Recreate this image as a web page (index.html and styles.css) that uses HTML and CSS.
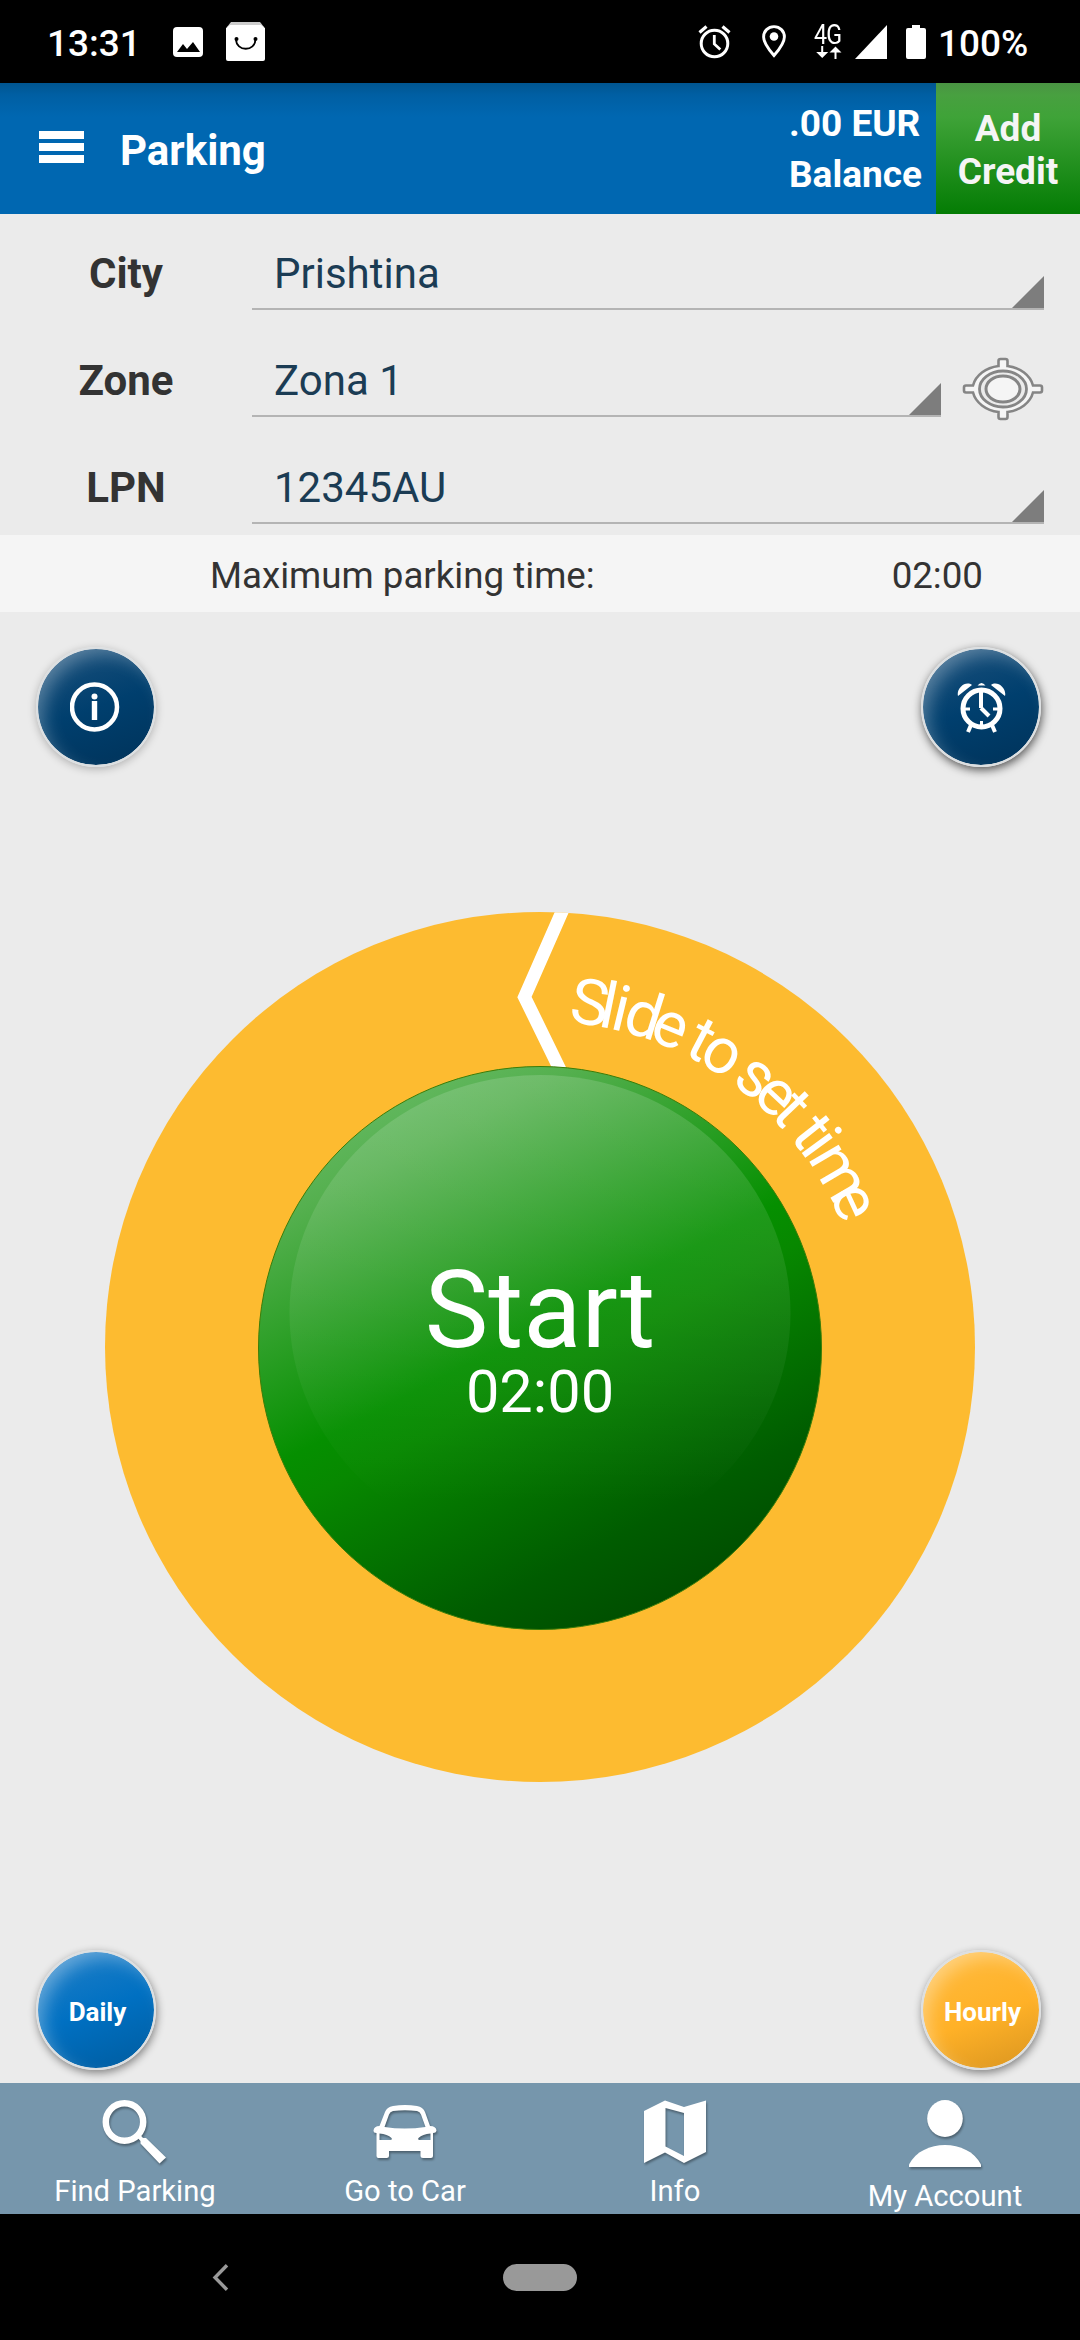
FILE: index.html
```html
<!DOCTYPE html>
<html lang="en">
<head>
    <meta charset="utf-8">
    <title>Parking</title>
    <link rel="stylesheet" href="styles.css">
</head>
<body>

    <div class="status-bar">
        <span class="clock">13:31</span>
        <svg class="icon-image" width="30" height="30" viewBox="0 0 30 30">
            <rect width="30" height="30" rx="4" fill="#fff"/>
            <path d="M4 25l6-8 4 5 6-7 7 10z" fill="#000"/>
        </svg>
        <svg class="icon-bag" width="39" height="39" viewBox="0 0 39 39">
            <path d="M5 0h29l4 5H1z" fill="#ccc"/>
            <path d="M4 3h31l4 3v31a2 2 0 0 1-2 2H2a2 2 0 0 1-2-2V6z" fill="#fff"/>
            <path d="M10 17c0 13 19.500 13 19.500 0" fill="none" stroke="#000" stroke-width="1.800"/>
            <circle cx="10.500" cy="17" r="2" fill="#000"/>
            <circle cx="29.500" cy="17" r="2" fill="#000"/>
        </svg>
        <svg class="icon-alarm" width="33" height="34" viewBox="0 0 33 34" fill="none" stroke="#fff">
            <circle cx="16.500" cy="18.500" r="13.300" stroke-width="3"/>
            <path d="M1.500 7.500l7-6M31.500 7.500l-7-6" stroke-width="3.200"/>
            <path d="M16.300 10v9l6 5.500" stroke-width="2.800"/>
        </svg>
        <svg class="icon-pin" width="24" height="33" viewBox="0 0 24 33">
            <path d="M12 1.600C6 1.600 1.600 6.200 1.600 12c0 6.500 6 13.500 10.400 18.500C16.400 25.500 22.400 18.500 22.400 12 22.400 6.200 18 1.600 12 1.600z" fill="none" stroke="#fff" stroke-width="2.900"/>
            <circle cx="12" cy="11.500" r="4.300" fill="#fff"/>
        </svg>
        <div class="network">
            <span>4G</span>
            <svg width="26" height="13" viewBox="0 0 26 13" fill="#fff">
                <path d="M5.200 0h2v6h5l-6 6-6-6h5zM18.500 13h2V6.500h5l-6-6-6 6h5z"/>
            </svg>
        </div>
        <svg class="icon-signal" width="32" height="34" viewBox="0 0 32 34">
            <path d="M0 34L32 0v34z" fill="#fff"/>
        </svg>
        <svg class="icon-battery" width="20" height="34" viewBox="0 0 20 34">
            <path d="M6 0h8v3h4a2 2 0 0 1 2 2v27a2 2 0 0 1-2 2H2a2 2 0 0 1-2-2V5a2 2 0 0 1 2-2h4z" fill="#fff"/>
        </svg>
        <span class="percent">100%</span>
    </div>

    <div class="header">
        <div class="menu"><i></i><i></i><i></i></div>
        <div class="title">Parking</div>
        <div class="balance">.00 EUR<br>Balance</div>
        <div class="add-credit">Add<br>Credit</div>
    </div>

    <div class="form">
        <div class="row">
            <div class="label">City</div>
            <div class="field">Prishtina<i class="corner"></i></div>
        </div>
        <div class="row">
            <div class="label">Zone</div>
            <div class="field">Zona 1<i class="corner"></i></div>
            <svg class="locate" width="82" height="64" viewBox="0 0 82 64" fill="none">
                <path d="M36.500 9V4q0-2 2-2h5q2 0 2 2v5A31 25 0 0 1 71 28.500h7q2 0 2 2v3q0 2-2 2h-7A31 25 0 0 1 45.500 55v5q0 2-2 2h-5q-2 0-2-2v-5A31 25 0 0 1 11 35.500H4q-2 0-2-2v-3q0-2 2-2h7A31 25 0 0 1 36.500 9z" fill="#f5f5f5" stroke="#858585" stroke-width="2.600"/>
                <ellipse cx="41" cy="32" rx="23.500" ry="18" fill="#ebebeb" stroke="#858585" stroke-width="2.800"/>
                <ellipse cx="41" cy="32" rx="17" ry="13" fill="#f5f5f5" stroke="#858585" stroke-width="3"/>
            </svg>
        </div>
        <div class="row">
            <div class="label">LPN</div>
            <div class="field">12345AU<i class="corner"></i></div>
        </div>
    </div>

    <div class="max-time">
        <span>Maximum parking time:</span>
        <span>02:00</span>
    </div>

    <div class="stage">
        <div class="buttons">
            <div class="round navy soft">
                <svg width="52" height="52" viewBox="0 0 52 52">
                    <circle cx="24.500" cy="26" r="22.500" fill="none" stroke="#fff" stroke-width="4.500"/>
                    <circle cx="24.500" cy="15.500" r="3" fill="#fff"/>
                    <rect x="21.800" y="20" width="5.400" height="19" fill="#fff"/>
                </svg>
            </div>
            <div class="round navy strong">
                <svg width="50" height="52" viewBox="0 0 50 52" fill="none" stroke="#fff">
                    <circle cx="25.500" cy="27.500" r="18.500" stroke-width="5"/>
                    <path d="M25 9v18" stroke-width="4"/>
                    <path d="M25 27l8 8" stroke-width="4"/>
                    <path d="M7 28h7M37 28h7M25.500 40v6" stroke-width="3"/>
                    <path d="M15 44l-3 7M36 44l3 7" stroke-width="4"/>
                    <path d="M2 15C0 7 10-1 16 4zM49 15C51 7 41-1 35 4zM21.500 4.500q4-5 8 0z" fill="#fff" stroke="none"/>
                </svg>
            </div>
        </div>

        <svg class="dial" width="870" height="870" viewBox="0 0 870 870">
            <defs>
                <linearGradient id="ball" x1="0.240" y1="0" x2="0.760" y2="1">
                    <stop offset="0.060" stop-color="#5fb65b"/>
                    <stop offset="0.130" stop-color="#55b04f"/>
                    <stop offset="0.470" stop-color="#058f00"/>
                    <stop offset="0.540" stop-color="#078800"/>
                    <stop offset="0.820" stop-color="#005c00"/>
                    <stop offset="0.960" stop-color="#004d00"/>
                </linearGradient>
                <linearGradient id="shine" x1="0" y1="0" x2="0" y2="1">
                    <stop offset="0" stop-color="#fff" stop-opacity="0.150"/>
                    <stop offset="0.900" stop-color="#fff" stop-opacity="0"/>
                </linearGradient>
                <clipPath id="ring"><circle cx="435" cy="435" r="435"/></clipPath>
                <path id="arc" d="M435 109A326 326 0 0 1 435 761"/>
            </defs>
            <circle cx="435" cy="435" r="435" fill="#fdbb30"/>
            <path d="M463 -14L419.500 85 461 170" fill="none" stroke="#fff" stroke-width="13" clip-path="url(#ring)"/>
            <text class="slide-text"><textPath href="#arc" startOffset="28"><tspan dx="0 -8.7 -3.6 -3.6 -8.3 -7.8 -3.7 -4.8 -8.4 -3.7 -7.6 -7.8 -4.8 -3.7 -4.8 -3.6 -14">Slide to set time</tspan></textPath></text>
            <circle cx="435" cy="436" r="281.500" fill="url(#ball)" stroke="#3c7d08" stroke-width="1"/>
            <ellipse cx="435" cy="401" rx="250.500" ry="238" fill="url(#shine)"/>
            <text class="start" x="435" y="435">Start</text>
            <text class="start-time" x="435" y="499.500">02:00</text>
        </svg>

        <div class="buttons">
            <div class="round blue">Daily</div>
            <div class="round amber">Hourly</div>
        </div>
    </div>

    <div class="tabs">
        <div class="tab">
            <svg width="66" height="66" viewBox="0 0 66 66">
                <circle cx="22.500" cy="23" r="18.700" fill="none" stroke="#fff" stroke-width="6.500"/>
                <path d="M34 37l4.500 5v2.500l19 20L64 58.500 44 39h-3l-4-4.500z" fill="#fff"/>
            </svg>
            <span>Find Parking</span>
        </div>
        <div class="tab">
            <svg width="66" height="66" viewBox="0 0 66 66">
                <path fill="#fff" fill-rule="evenodd" d="M7.500 27L13 13q2-5 8-6 12-2 24 0 6 1 8 6l5 14q6 0 6.500 4.500-.5 2.500-3.500 2.500v23q0 2-2 2h-8q-2.500 0-2.500-2.500V52H17v4.500q0 2.500-2.500 2.500h-8q-2 0-2-2V34q-3 0-3-2.500Q2 27 7.500 27zM12.500 28q20 3 41 0L49 15.500q-1-3-4-3.500-12-1.500-24 0-3 .5-4 3.500zM7.500 34.500v6.500h11q2 0 1-2-4-4-12-4.500zM58.500 34.500v6.500h-11q-2 0-1-2 4-4 12-4.500z"/>
            </svg>
            <span>Go to Car</span>
        </div>
        <div class="tab">
            <svg width="66" height="66" viewBox="0 0 66 66">
                <path fill="#fff" fill-rule="evenodd" d="M2 12L23 1.500 42 8 64 1.500V53L42 64 23 53.500 2 64zM23.500 9v38.500L42 57V14z"/>
            </svg>
            <span>Info</span>
        </div>
        <div class="tab account">
            <svg width="74" height="70" viewBox="0 0 74 70" fill="#fff">
                <ellipse cx="37" cy="19.500" rx="17.800" ry="18.500"/>
                <path d="M1 65.500C14 39.500 60 39.500 73 65.500V68H1z"/>
            </svg>
            <span>My Account</span>
        </div>
    </div>

    <div class="system-nav">
        <svg class="back" width="17" height="27" viewBox="0 0 17 27">
            <path d="M15 1.300L3 13.500 15 25.700" fill="none" stroke="#999" stroke-width="3.400"/>
        </svg>
        <div class="home"></div>
    </div>

</body>
</html>
```
FILE: styles.css
```css
body {
    width: 1080px;
    height: 2340px;
    margin: 0;
    display: flex;
    flex-direction: column;
    overflow: hidden;
    font-family: Roboto, "Liberation Sans", sans-serif;
    background-color: #ebebeb;
    color: #fff;
}
svg {
    display: block;
    flex-shrink: 0;
}
.status-bar {
    height: 83px;
    display: flex;
    align-items: center;
    background-color: #000;
    font-size: 37px;
    font-weight: 500;
    box-sizing: border-box;
    padding-left: 47px;
}
.clock, .percent {
    padding-top: 4px;
}
.clock {
    width: 126px;
}
.icon-bag {
    margin-left: 23px;
}
.icon-alarm {
    margin-left: 433px;
}
.icon-pin {
    margin-left: 31px;
}
.network {
    width: 28px;
    margin-left: 28px;
    padding-top: 0;
}
.network span {
    display: block;
    font-size: 27px;
    font-weight: 400;
    line-height: 22px;
    letter-spacing: -1px;
    transform: scaleX(0.86);
    transform-origin: left;
}
.network svg {
    margin: 0 0 0 2px;
}
.icon-signal {
    margin-left: 13px;
}
.icon-battery {
    margin-left: 19px;
}
.percent {
    margin-left: 12px;
}
.header {
    height: 131px;
    display: flex;
    align-items: center;
    background: linear-gradient(#005590, #005fa3 12px, #0067b1 34px);
    font-weight: 700;
}
.menu {
    width: 45px;
    margin: 0 0 3px 39px;
    display: flex;
    flex-direction: column;
    gap: 4px;
}
.menu i {
    height: 8px;
    background-color: #fff;
}
.title {
    flex: 1;
    margin-left: 36px;
    padding-top: 4px;
    font-size: 42px;
}
.balance {
    width: 147px;
    font-size: 37px;
    line-height: 51px;
    white-space: nowrap;
}
.add-credit {
    width: 144px;
    height: 131px;
    padding-top: 24px;
    box-sizing: border-box;
    background: linear-gradient(#4a9443, #48a040 12px, #3fa338 34px, #047c04);
    color: #f5f5f5;
    font-size: 37px;
    line-height: 43px;
    text-align: center;
}
.form {
    height: 321px;
}
.row {
    display: flex;
    height: 107px;
    padding-right: 36px;
    font-size: 42px;
    line-height: 69px;
}
.label {
    width: 252px;
    padding-top: 25px;
    text-align: center;
    font-weight: 700;
    color: #333;
}
.field {
    flex: 1;
    display: flex;
    justify-content: space-between;
    align-items: flex-end;
    height: 69px;
    padding: 25px 0 0 22px;
    border-bottom: 2px solid #b4b4b4;
    color: #1b3c54;
}
.corner {
    width: 32px;
    height: 32px;
    background-color: #7d7d7d;
    clip-path: polygon(100% 0, 100% 100%, 0 100%);
}
.locate {
    margin: 36px 0 0 21px;
}
.max-time {
    height: 77px;
    display: flex;
    justify-content: space-between;
    align-items: center;
    box-sizing: border-box;
    padding: 4px 97px 0 210px;
    background-color: #f5f5f5;
    color: #333;
    font-size: 36.700px;
}
.stage {
    height: 1471px;
    display: flex;
    flex-direction: column;
    align-items: center;
    box-sizing: border-box;
    padding: 35px 0 13px;
}
.buttons {
    width: 1080px;
    box-sizing: border-box;
    padding: 0 39px 0 36px;
    display: flex;
    justify-content: space-between;
}
.round {
    width: 120px;
    height: 120px;
    display: flex;
    justify-content: center;
    align-items: center;
    box-sizing: border-box;
    border: 2px solid #dcdfe1;
    border-radius: 50%;
    font-size: 26px;
    font-weight: 700;
    padding: 3px 0 0 3px;
    box-shadow: 1px 3px 9px rgba(0, 0, 0, 0.45), inset 9px 9px 18px -4px rgba(255, 255, 255, 0.35);
}
.navy {
    padding: 0;
    background: linear-gradient(160deg, #1d527d, #003f6e 50%, #00335a);
    background-clip: padding-box;
}
.soft {
    box-shadow: 0 2px 8px rgba(0, 0, 0, 0.25), inset 9px 9px 18px -4px rgba(255, 255, 255, 0.3);
}
.strong {
    box-shadow: 1px 3px 10px rgba(0, 0, 0, 0.65), inset 9px 9px 18px -4px rgba(255, 255, 255, 0.3);
}
.blue {
    background: linear-gradient(160deg, #2280c8, #0070c2 50%, #005c9f);
    background-clip: padding-box;
}
.amber {
    background: linear-gradient(160deg, #ffbc40, #ffb127 55%, #d99520);
    background-clip: padding-box;
}
.dial {
    margin: 145px 0 auto -1px;
}
.dial text {
    fill: #fff;
}
.slide-text {
    font-size: 64px;
}
.start, .start-time {
    text-anchor: middle;
}
.start {
    font-size: 107px;
}
.start-time {
    font-size: 59.500px;
}
.tabs {
    height: 131px;
    display: flex;
    background-color: #7696ac;
    font-size: 29.200px;
    line-height: 36px;
}
.tab {
    width: 270px;
    display: flex;
    flex-direction: column;
    align-items: center;
    padding-top: 16px;
}
.tab svg {
    filter: drop-shadow(1px 2px 1px rgba(0, 0, 0, 0.35));
}
.tab span {
    margin-top: 8px;
}
.account span {
    margin-top: 9px;
}
.system-nav {
    flex: 1;
    display: flex;
    align-items: center;
    background-color: #000;
}
.back {
    margin-left: 212px;
}
.home {
    width: 74px;
    height: 27px;
    margin-left: 274px;
    border-radius: 14px;
    background-color: #999;
}
```
